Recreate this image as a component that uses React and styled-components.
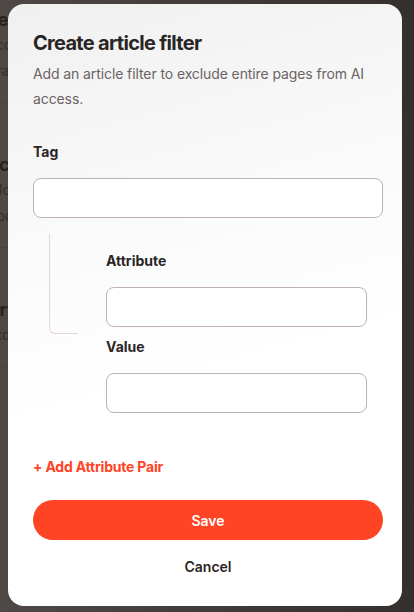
import React from 'react';
import styled, { createGlobalStyle } from 'styled-components';

const GlobalStyle = createGlobalStyle`
  html, body {
    margin: 0;
    padding: 0;
    height: 100%;
  }
  body {
    font-family: Inter, "Noto Sans", sans-serif;
    background: #f7f6f5;
    overflow: hidden;
  }
  * {
    box-sizing: border-box;
  }
`;

const Page = styled.div`
  width: 414px;
  height: 612px;
  margin-left: -14px;
  padding-top: 8px;
  color: #2a2525;
`;

const PageSection = styled.div`
  padding: 0 0 18px;
  margin-bottom: 50px;
  border-bottom: 1px solid #dcd6d3;
`;

const PageHeading = styled.div`
  font-size: 18px;
  font-weight: 700;
  line-height: 24px;
`;

const PageText = styled.div`
  font-size: 14px;
  color: #6b6363;
  line-height: 26px;
`;

const Overlay = styled.div`
  position: fixed;
  inset: 0;
  background: linear-gradient(90deg, rgba(40, 34, 30, 0.82), rgba(35, 30, 28, 0.92));
  display: flex;
  align-items: flex-start;
  padding: 4px 12px 6px 8px;
`;

const Modal = styled.div`
  width: 394px;
  height: 602px;
  border-radius: 16px;
  background: linear-gradient(165deg, #f0f0f0 0%, #fafafa 35%, #ffffff 60%);
  padding: 25px 19px 0 25px;
  display: flex;
  flex-direction: column;
`;

const Title = styled.h2`
  margin: 0;
  font-size: 20px;
  font-weight: 700;
  line-height: 28px;
  color: #2a2525;
  letter-spacing: -0.7px;
`;

const Subtitle = styled.p`
  margin: 4px 0 0;
  font-size: 14px;
  line-height: 25px;
  color: #6b6363;
  letter-spacing: -0.1px;
`;

const Field = styled.div`
  display: flex;
  flex-direction: column;
  margin-top: ${(p) => p.$top || 0}px;
`;

const Label = styled.label`
  font-size: 14px;
  font-weight: 700;
  line-height: 20px;
  color: #2a2525;
  margin-bottom: 16px;
`;

const Input = styled.input`
  width: ${(p) => p.$width || 350}px;
  height: 40px;
  border: 1px solid #bfb2b0;
  border-radius: 8px;
  background: #fff;
  font: inherit;
  font-size: 14px;
  padding: 0 12px;
  outline: none;
`;

const Group = styled.div`
  display: flex;
  margin-top: 16px;
`;

const Branch = styled.div`
  width: 29px;
  height: 100px;
  margin-left: 16px;
  border-left: 1px solid #e6d6d3;
  border-bottom: 1px solid #e6d6d3;
  border-bottom-left-radius: 6px;
  flex-shrink: 0;
`;

const Pairs = styled.div`
  display: flex;
  flex-direction: column;
  margin-left: 28px;
  padding-top: 17px;
`;

const AddLink = styled.button`
  align-self: flex-start;
  margin-top: 44px;
  padding: 0;
  border: none;
  background: none;
  font: inherit;
  font-size: 14px;
  font-weight: 700;
  line-height: 20px;
  color: #ff4325;
  letter-spacing: -0.2px;
  cursor: pointer;
`;

const SaveButton = styled.button`
  margin-top: 23px;
  width: 350px;
  height: 40px;
  border: none;
  border-radius: 20px;
  background: #ff4325;
  color: #fff;
  font: inherit;
  font-size: 14px;
  font-weight: 600;
  cursor: pointer;
`;

const CancelButton = styled.button`
  margin-top: 16px;
  width: 350px;
  height: 20px;
  border: none;
  background: none;
  color: #2a2525;
  font: inherit;
  font-size: 14px;
  font-weight: 600;
  cursor: pointer;
`;

export default function App() {
  return (
    <>
      <GlobalStyle />
      <Page>
        <PageSection>
          <PageHeading>Settings</PageHeading>
          <PageText>Access control for AI</PageText>
          <PageText>Crawlers and agents</PageText>
        </PageSection>
        <PageSection>
          <PageHeading>Access</PageHeading>
          <PageText>Allow or block AI bots</PageText>
          <PageText>Updated recently</PageText>
        </PageSection>
        <PageSection>
          <PageHeading>Article filters</PageHeading>
          <PageText>Exclude pages</PageText>
        </PageSection>
      </Page>
      <Overlay>
        <Modal role="dialog">
          <Title>Create article filter</Title>
          <Subtitle>Add an article filter to exclude entire pages from AI access.</Subtitle>
          <Field $top={31}>
            <Label>Tag</Label>
            <Input />
          </Field>
          <Group>
            <Branch />
            <Pairs>
              <Field>
                <Label>Attribute</Label>
                <Input $width={261} />
              </Field>
              <Field $top={10}>
                <Label>Value</Label>
                <Input $width={261} />
              </Field>
            </Pairs>
          </Group>
          <AddLink>+ Add Attribute Pair</AddLink>
          <SaveButton>Save</SaveButton>
          <CancelButton>Cancel</CancelButton>
        </Modal>
      </Overlay>
    </>
  );
}
